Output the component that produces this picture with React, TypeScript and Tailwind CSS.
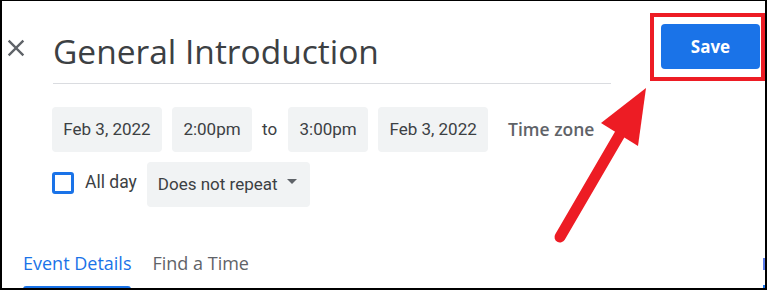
const chip = "h-[45px] flex items-center justify-center rounded-[4px] bg-[#f1f3f4] text-[17px] text-[#3c4043] font-['Roboto',sans-serif]"

export default function App() {
  return (
    <div className="relative w-[767px] h-[290px] overflow-hidden bg-white border-t border-l-2 border-r-2 border-b-2 border-black">
      {/* header */}
      <div className="flex">
        <div className="w-[51px] shrink-0 pt-[33px]">
          <svg width="28" height="28" viewBox="0 0 24 24" fill="#5f6368">
            <path d="M19 6.41L17.59 5 12 10.59 6.41 5 5 6.41 10.59 12 5 17.59 6.41 19 12 13.41 17.59 19 19 17.59 13.41 12z" />
          </svg>
        </div>
        <div className="mt-[30px] h-[53px] w-[558px] shrink-0 border-b border-[#dadce0]">
          <h1 className="text-[33.5px] leading-[40px] text-[#3c4043] font-['Open_Sans',sans-serif]">General Introduction</h1>
        </div>
        <div className="ml-[50px] mt-[23px]">
          <button className="w-[99px] h-[45px] rounded-[4px] bg-[#1a73e8] text-white text-[17px] font-bold font-['Open_Sans',sans-serif]">
            Save
          </button>
        </div>
      </div>

      {/* date / time rows */}
      <div className="pl-[50px] mt-[23px]">
        <div className="flex items-center gap-[10px]">
          <div className={`${chip} w-[110px]`}>Feb 3, 2022</div>
          <div className={`${chip} w-[80px]`}>2:00pm</div>
          <span className="text-[17px] text-[#3c4043] font-['Roboto',sans-serif]">to</span>
          <div className={`${chip} w-[80px] ml-px`}>3:00pm</div>
          <div className={`${chip} w-[110px]`}>Feb 3, 2022</div>
          <span className="pl-[10px] text-[17.5px] font-semibold text-[#5f6368] font-['Open_Sans',sans-serif]">Time zone</span>
        </div>

        <div className="flex items-center mt-[10px] h-[45px]">
          <div className="w-[22px] h-[22px] mb-[3px] rounded-[3px] border-[3px] border-[#1a73e8]" />
          <span className="ml-[11px] mb-[4px] text-[17.5px] text-[#3c4043] font-['Roboto',sans-serif]">All day</span>
          <div className="ml-[10px] w-[163px] h-[45px] flex items-center pl-[11px] rounded-[4px] bg-[#f1f3f4]">
            <span className="text-[17px] text-[#3c4043] font-['Roboto',sans-serif]">Does not repeat</span>
            <svg className="ml-auto mr-[13px] mb-[6px]" width="10" height="5" viewBox="0 0 10 5" fill="#5f6368">
              <path d="M0 0h10L5 5z" />
            </svg>
          </div>
        </div>
      </div>

      {/* tabs */}
      <div className="flex mt-[44px] pl-[21px] gap-[21px]">
        <div className="flex flex-col">
          <span className="text-[18px] leading-[24px] font-medium text-[#1a73e8] font-['Open_Sans',sans-serif]">Event Details</span>
          <div className="mt-[11px] h-[3px] rounded-t-[3px] bg-[#1a73e8]" />
        </div>
        <span className="text-[18px] leading-[24px] font-medium text-[#5f6368] font-['Open_Sans',sans-serif]">Find a Time</span>
        <div className="ml-auto w-[2px] flex flex-col">
          <div className="mt-[7px] h-[12px] bg-[#5b7be8]" />
          <div className="mt-[15px] h-[5px] bg-[#1a73e8]" />
        </div>
      </div>

      {/* annotation: red box + arrow */}
      <div className="absolute left-[648px] top-[12px] w-[115px] h-[68px] border-4 border-[#ed1c24]" />
      <svg className="absolute left-[-2px] top-[-1px] pointer-events-none" width="767" height="290" viewBox="0 0 767 290">
        <line x1="560" y1="237" x2="620" y2="134" stroke="#ed1c24" strokeWidth="11" strokeLinecap="round" />
        <polygon points="646,88 601,123 638,146" fill="#ed1c24" />
      </svg>
    </div>
  )
}
